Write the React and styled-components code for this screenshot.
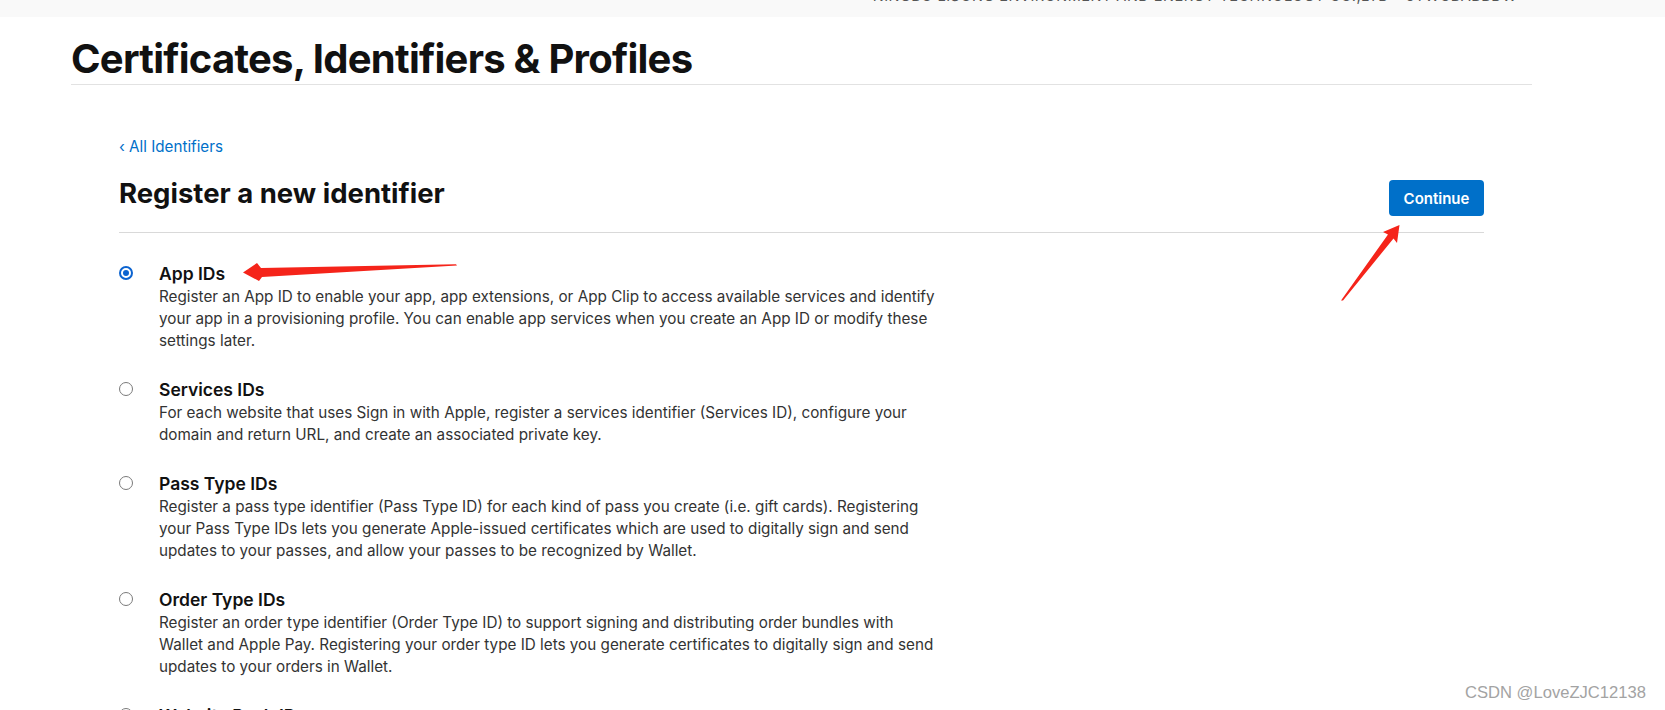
import React, { useState } from 'react';
import styled, { createGlobalStyle } from 'styled-components';

const GlobalStyle = createGlobalStyle`
  body {
    margin: 0;
    background: #fff;
    font-family: Inter, "Noto Sans", "Liberation Sans", sans-serif;
    color: #1d1d1f;
  }
`;

const Page = styled.div`
  position: relative;
  height: 710px;
  overflow: hidden;
`;

const TopBar = styled.div`
  height: 17px;
  background: #f9f9f9;
  display: flex;
  justify-content: flex-end;
  padding-right: 148px;
  overflow: hidden;
`;

const AccountName = styled.span`
  font-size: 14.5px;
  line-height: 16px;
  margin-top: -12px;
  color: #555;
  letter-spacing: 0.5px;
  text-transform: uppercase;
`;

const Main = styled.main`
  width: 1461px;
  padding-left: 71px;
`;

const TitleBar = styled.div`
  margin-top: 18px;
  padding-bottom: 1px;
  border-bottom: 1px solid #e2e2e2;
`;

const PageTitle = styled.h1`
  margin: 0;
  font-size: 40px;
  line-height: 48px;
  font-weight: 700;
  letter-spacing: -0.75px;
  color: #111;
`;

const Section = styled.section`
  width: 1365px;
  margin-left: 48px;
`;

const BackLink = styled.a`
  display: inline-block;
  margin-top: 52px;
  font-size: 15.2px;
  line-height: 20px;
  color: #0070c9;
  text-decoration: none;
`;

const HeaderRow = styled.div`
  display: flex;
  justify-content: space-between;
  align-items: flex-start;
  margin-top: 20px;
  padding-bottom: 16px;
  border-bottom: 1px solid #d9d9d9;
`;

const SectionTitle = styled.h2`
  margin: 0;
  font-size: 27.5px;
  line-height: 32px;
  font-weight: 700;
  color: #111;
`;

const ContinueButton = styled.button`
  margin-top: 3px;
  width: 95px;
  height: 36px;
  border: none;
  border-radius: 4px;
  background: #0070c9;
  color: #fff;
  font-family: inherit;
  font-size: 15px;
  font-weight: 600;
  cursor: pointer;
`;

const OptionList = styled.div`
  display: flex;
  flex-direction: column;
  gap: 26px;
  padding-top: 29px;
`;

const Option = styled.label`
  display: grid;
  grid-template-columns: 40px 1fr;
  cursor: pointer;
`;

const Radio = styled.span`
  width: 14px;
  height: 14px;
  margin: 4px 0 0 0;
  box-sizing: border-box;
  border-radius: 50%;
  border: ${p => (p.checked ? '2px solid #0b63d0' : '1px solid #7a7a7a')};
  background: #fff;
  display: flex;
  align-items: center;
  justify-content: center;

  &::after {
    content: '';
    width: 6px;
    height: 6px;
    border-radius: 50%;
    background: ${p => (p.checked ? '#0b63d0' : 'transparent')};
  }
`;

const OptionTitle = styled.div`
  font-size: 17.5px;
  line-height: 24px;
  font-weight: 600;
  color: #111;
`;

const OptionText = styled.p`
  margin: 0;
  font-size: 15.25px;
  line-height: 22px;
  color: #333;
  white-space: pre-line;
`;

const Annotation = styled.svg`
  position: absolute;
  left: 0;
  top: 0;
  pointer-events: none;
`;

const Watermark = styled.div`
  position: absolute;
  right: 19px;
  top: 683px;
  font-family: "Liberation Sans", Arial, sans-serif;
  font-size: 16.6px;
  line-height: 20px;
  color: #a3a3a3;
`;

const options = [
  {
    id: 'app',
    title: 'App IDs',
    text: 'Register an App ID to enable your app, app extensions, or App Clip to access available services and identify\nyour app in a provisioning profile. You can enable app services when you create an App ID or modify these\nsettings later.',
  },
  {
    id: 'services',
    title: 'Services IDs',
    text: 'For each website that uses Sign in with Apple, register a services identifier (Services ID), configure your\ndomain and return URL, and create an associated private key.',
  },
  {
    id: 'pass',
    title: 'Pass Type IDs',
    text: 'Register a pass type identifier (Pass Type ID) for each kind of pass you create (i.e. gift cards). Registering\nyour Pass Type IDs lets you generate Apple-issued certificates which are used to digitally sign and send\nupdates to your passes, and allow your passes to be recognized by Wallet.',
  },
  {
    id: 'order',
    title: 'Order Type IDs',
    text: 'Register an order type identifier (Order Type ID) to support signing and distributing order bundles with\nWallet and Apple Pay. Registering your order type ID lets you generate certificates to digitally sign and send\nupdates to your orders in Wallet.',
  },
  {
    id: 'website',
    title: 'Website Push IDs',
    text: 'Register a Website Push ID to send push notifications to your website visitors.',
  },
];

function App() {
  const [selected, setSelected] = useState('app');

  return (
    <Page>
      <GlobalStyle />
      <TopBar>
        <AccountName>Ningbo Lisong Environment and Energy Technology Co.,Ltd - 6TWCBABBDW</AccountName>
      </TopBar>
      <Main>
        <TitleBar>
          <PageTitle>Certificates, Identifiers &amp; Profiles</PageTitle>
        </TitleBar>
        <Section>
          <BackLink href="#">‹ All Identifiers</BackLink>
          <HeaderRow>
            <SectionTitle>Register a new identifier</SectionTitle>
            <ContinueButton>Continue</ContinueButton>
          </HeaderRow>
          <OptionList>
            {options.map(o => (
              <Option key={o.id} onClick={() => setSelected(o.id)}>
                <Radio checked={selected === o.id} />
                <div>
                  <OptionTitle>{o.title}</OptionTitle>
                  <OptionText>{o.text}</OptionText>
                </div>
              </Option>
            ))}
          </OptionList>
        </Section>
      </Main>

      <Annotation width="1665" height="710" viewBox="0 0 1665 710">
        <polygon
          fill="#f5241a"
          points="243,272.5 257,263 261,268 456,264.3 457,265.6 262,277 259,281"
        />
        <polygon
          fill="#f5241a"
          points="1399.5,225 1383,232 1388,234.5 1341,300.5 1343,300.5 1393.5,238.5 1397,243"
        />
      </Annotation>
      <Watermark>CSDN @LoveZJC12138</Watermark>
    </Page>
  );
}

export default App;
